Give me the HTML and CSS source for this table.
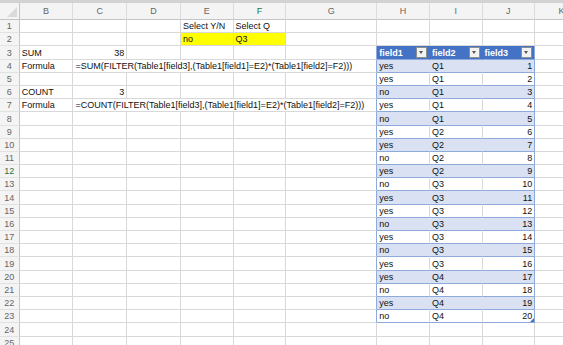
FILE: index.html
```html
<!DOCTYPE html>
<html lang="en">
<head>
    <meta charset="UTF-8">
    <title>Sheet1</title>
    <link rel="stylesheet" href="styles.css">
</head>
<body>
    <div class="topbar"></div>
    <table class="sheet">
        <colgroup>
            <col class="c-rows"><col class="c54"><col class="c54"><col class="c54"><col class="c53"><col class="c53">
            <col class="c88"><col class="c53"><col class="c53"><col class="c53"><col class="c54">
        </colgroup>
        <tr class="heads">
            <th class="corner"></th><th>B</th><th>C</th><th>D</th><th>E</th><th class="active">F</th><th>G</th><th>H</th><th>I</th><th>J</th><th>K</th>
        </tr>
        <tr><th class="rn">1</th><td></td><td></td><td></td><td>Select Y/N</td><td>Select Q</td><td></td><td></td><td></td><td></td><td></td></tr>
        <tr><th class="rn">2</th><td></td><td></td><td></td><td class="yellow">no</td><td class="yellow">Q3</td><td></td><td></td><td></td><td></td><td></td></tr>
        <tr><th class="rn">3</th><td>SUM</td><td class="num">38</td><td></td><td></td><td></td><td class="edge"></td>
            <td class="th-cell">field1<span class="filter"></span></td><td class="th-cell">field2<span class="filter"></span></td><td class="th-cell last">field3<span class="filter"></span></td><td></td></tr>
        <tr><th class="rn">4</th><td>Formula</td><td colspan="5" class="edge">=SUM(FILTER(Table1[field3],(Table1[field1]=E2)*(Table1[field2]=F2)))</td>
            <td class="t band">yes</td><td class="t band">Q1</td><td class="t band last num">1</td><td></td></tr>
        <tr><th class="rn">5</th><td></td><td></td><td></td><td></td><td></td><td class="edge"></td>
            <td class="t">yes</td><td class="t">Q1</td><td class="t last num">2</td><td></td></tr>
        <tr><th class="rn">6</th><td>COUNT</td><td class="num">3</td><td></td><td></td><td></td><td class="edge"></td>
            <td class="t band">no</td><td class="t band">Q1</td><td class="t band last num">3</td><td></td></tr>
        <tr><th class="rn">7</th><td>Formula</td><td colspan="5" class="edge">=COUNT(FILTER(Table1[field3],(Table1[field1]=E2)*(Table1[field2]=F2)))</td>
            <td class="t">yes</td><td class="t">Q1</td><td class="t last num">4</td><td></td></tr>
        <tr><th class="rn">8</th><td></td><td></td><td></td><td></td><td></td><td class="edge"></td>
            <td class="t band">no</td><td class="t band">Q1</td><td class="t band last num">5</td><td></td></tr>
        <tr><th class="rn">9</th><td></td><td></td><td></td><td></td><td></td><td class="edge"></td>
            <td class="t">yes</td><td class="t">Q2</td><td class="t last num">6</td><td></td></tr>
        <tr><th class="rn">10</th><td></td><td></td><td></td><td></td><td></td><td class="edge"></td>
            <td class="t band">yes</td><td class="t band">Q2</td><td class="t band last num">7</td><td></td></tr>
        <tr><th class="rn">11</th><td></td><td></td><td></td><td></td><td></td><td class="edge"></td>
            <td class="t">no</td><td class="t">Q2</td><td class="t last num">8</td><td></td></tr>
        <tr><th class="rn active">12</th><td></td><td></td><td></td><td></td><td></td><td class="edge"></td>
            <td class="t band">yes</td><td class="t band">Q2</td><td class="t band last num">9</td><td></td></tr>
        <tr><th class="rn">13</th><td></td><td></td><td></td><td></td><td></td><td class="edge"></td>
            <td class="t">no</td><td class="t">Q3</td><td class="t last num">10</td><td></td></tr>
        <tr><th class="rn">14</th><td></td><td></td><td></td><td></td><td></td><td class="edge"></td>
            <td class="t band">yes</td><td class="t band">Q3</td><td class="t band last num">11</td><td></td></tr>
        <tr><th class="rn">15</th><td></td><td></td><td></td><td></td><td></td><td class="edge"></td>
            <td class="t">yes</td><td class="t">Q3</td><td class="t last num">12</td><td></td></tr>
        <tr><th class="rn">16</th><td></td><td></td><td></td><td></td><td></td><td class="edge"></td>
            <td class="t band">no</td><td class="t band">Q3</td><td class="t band last num">13</td><td></td></tr>
        <tr><th class="rn">17</th><td></td><td></td><td></td><td></td><td></td><td class="edge"></td>
            <td class="t">yes</td><td class="t">Q3</td><td class="t last num">14</td><td></td></tr>
        <tr><th class="rn">18</th><td></td><td></td><td></td><td></td><td></td><td class="edge"></td>
            <td class="t band">no</td><td class="t band">Q3</td><td class="t band last num">15</td><td></td></tr>
        <tr><th class="rn">19</th><td></td><td></td><td></td><td></td><td></td><td class="edge"></td>
            <td class="t">yes</td><td class="t">Q3</td><td class="t last num">16</td><td></td></tr>
        <tr><th class="rn">20</th><td></td><td></td><td></td><td></td><td></td><td class="edge"></td>
            <td class="t band">yes</td><td class="t band">Q4</td><td class="t band last num">17</td><td></td></tr>
        <tr><th class="rn">21</th><td></td><td></td><td></td><td></td><td></td><td class="edge"></td>
            <td class="t">no</td><td class="t">Q4</td><td class="t last num">18</td><td></td></tr>
        <tr><th class="rn">22</th><td></td><td></td><td></td><td></td><td></td><td class="edge"></td>
            <td class="t band">yes</td><td class="t band">Q4</td><td class="t band last num">19</td><td></td></tr>
        <tr><th class="rn">23</th><td></td><td></td><td></td><td></td><td></td><td class="edge"></td>
            <td class="t">no</td><td class="t">Q4</td><td class="t last num end">20</td><td></td></tr>
        <tr><th class="rn">24</th><td></td><td></td><td></td><td></td><td></td><td></td><td></td><td></td><td></td><td></td></tr>
        <tr><th class="rn">25</th><td></td><td></td><td></td><td></td><td></td><td></td><td></td><td></td><td></td><td></td></tr>
    </table>
</body>
</html>
```

FILE: styles.css
```css
body {
    margin: 0;
    overflow: hidden;
    background: #fff;
    font-family: "Liberation Sans", Arial, sans-serif;
    color: #111;
}
.topbar {
    height: 3px;
    background: #d2d2d2;
}
/* column widths below are content widths: each cell adds 4px padding + 1px border */
.sheet {
    table-layout: fixed;
    border-collapse: separate;
    border-spacing: 0;
    width: 589px;
}
.c-rows { width: 18px; }
.c53 { width: 48px; }
.c54 { width: 49px; }
.c88 { width: 83px; }

/* column letters */
.heads th {
    height: 16px;
    padding: 0 2px;
    background: #f4f4f4;
    border-right: 1px solid #dcdcdc;
    border-bottom: 1px solid #c4c4c4;
    font-weight: normal;
    font-size: 9px;
    color: #666;
    text-align: center;
    vertical-align: middle;
}
.heads th.corner {
    position: relative;
    padding: 0;
    border-right: 1px solid #c4c4c4;
}
.corner::after {
    content: "";
    position: absolute;
    right: 2px;
    bottom: 2px;
    border-left: 10px solid transparent;
    border-bottom: 10px solid #dadada;
}

/* row numbers */
tr {
    height: 13.2px;
}
th.rn {
    padding: 0;
    background: #f4f4f4;
    border-right: 1px solid #c4c4c4;
    border-bottom: 1px solid #e2e2e2;
    font-weight: normal;
    font-size: 9px;
    color: #666;
    text-align: center;
    vertical-align: bottom;
    line-height: 12px;
}
th.active {
    color: #217346;
}

td {
    padding: 0 2px;
    border-right: 1px solid #d8d8d8;
    border-bottom: 1px solid #d8d8d8;
    font-size: 9px;
    line-height: 12px;
    vertical-align: bottom;
    white-space: nowrap;
    overflow: hidden;
}
td.num {
    text-align: right;
}
td.yellow {
    background: #ffff00;
}
td.edge {
    border-right-color: #8eaadb;
}

/* Table1 */
td.th-cell {
    position: relative;
    background: #4472c4;
    color: #fff;
    font-weight: bold;
    border-right-color: #4472c4;
    border-bottom-color: #8eaadb;
}
.filter {
    position: absolute;
    right: 2px;
    top: 1px;
    width: 9px;
    height: 9px;
    background: #f2f2f2;
    border: 1px solid #8e8e8e;
}
.filter::after {
    content: "";
    position: absolute;
    left: 2px;
    top: 3px;
    border-left: 2.5px solid transparent;
    border-right: 2.5px solid transparent;
    border-top: 3px solid #555;
}
td.t {
    border-bottom-color: #8eaadb;
}
td.band {
    background: #d9e1f2;
    border-right-color: #d9e1f2;
}
td.last {
    border-right-color: #8eaadb;
}
td.th-cell.last {
    border-right-color: #8eaadb;
}
td.end {
    position: relative;
}
td.end::after {
    content: "";
    position: absolute;
    right: 0;
    bottom: 0;
    border-left: 4px solid transparent;
    border-bottom: 4px solid #4472c4;
}
```
